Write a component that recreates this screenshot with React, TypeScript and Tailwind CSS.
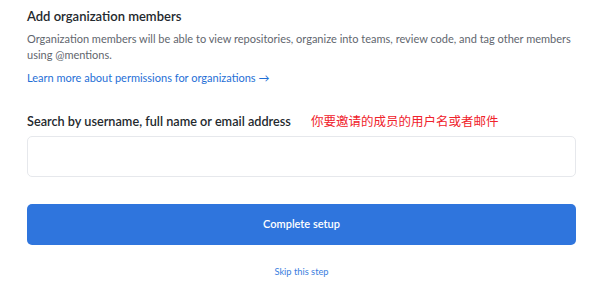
export default function App() {
  return (
    <div className="w-[600px] h-[286px] bg-white font-['Lato',sans-serif] overflow-hidden">
      <div className="pl-[27px] pr-[24px] pt-[7px]">
        <h2 className="text-[13px] leading-[18px] font-semibold text-[#24292e]">Add organization members</h2>
        <p className="mt-[6px] text-[11px] leading-[16px] text-[#5f666e]">
          Organization members will be able to view repositories, organize into teams, review code, and tag other members using @mentions.
        </p>
        <a className="mt-[7px] block text-[11px] leading-[16px] text-[#1f6fd6]">
          Learn more about permissions for organizations →
        </a>

        <div className="mt-[26px] flex items-center">
          <label className="text-[12.7px] leading-[18px] font-semibold text-[#24292e]">
            Search by username, full name or email address
          </label>
          <span className="ml-[20px] text-[12.5px] leading-[18px] text-[#f0222b] font-['Noto_Sans_CJK_SC',sans-serif]">
            你要邀请的成员的用户名或者邮件
          </span>
        </div>
        <input className="mt-[6px] block w-full h-[41px] rounded-[5px] border border-[#e6e8ec] outline-none px-3 text-[13px]" />

        <button className="mt-[27px] w-full h-[41px] rounded-[5px] bg-[#2f75dd] text-white text-[11px] font-semibold">
          Complete setup
        </button>
        <div className="mt-[17px] text-center leading-[14px]">
          <a className="text-[9.3px] leading-[14px] text-[#3a7ee0]">Skip this step</a>
        </div>
      </div>
    </div>
  );
}
